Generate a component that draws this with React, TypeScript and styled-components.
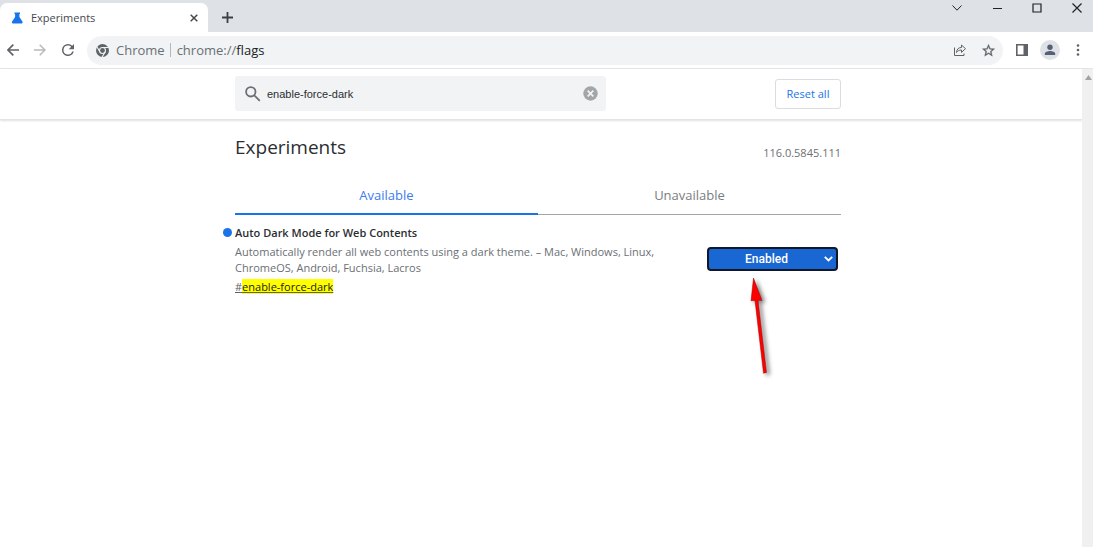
import React, { useState } from "react";
import styled, { createGlobalStyle } from "styled-components";

const GlobalStyle = createGlobalStyle`
  * { box-sizing: border-box; }
  html, body, #root { height: 100%; }
  body {
    margin: 0;
    background: #fff;
    color: #2b2e32;
    font-family: "Open Sans", "Noto Sans", sans-serif;
    font-size: 11px;
    overflow: hidden;
  }
  button, input, select { font: inherit; color: inherit; margin: 0; }
`;

const Window = styled.div`
  display: flex;
  flex-direction: column;
  min-height: 100vh;
`;

const TabStrip = styled.div`
  display: flex;
  height: 32px;
  background: #dee1e6;
`;

const BrowserTab = styled.div`
  display: flex;
  align-items: center;
  width: 208px;
  margin-top: 3px;
  padding: 0 8px 0 11px;
  border-radius: 7px 7px 0 0;
  background: #fff;
  color: #45494d;
`;

const TabTitle = styled.span`
  flex: 1;
  margin-left: 7px;
`;

const IconButton = styled.button<{ $size?: number }>`
  display: grid;
  place-items: center;
  flex: none;
  width: ${(p) => p.$size ?? 28}px;
  height: ${(p) => p.$size ?? 28}px;
  padding: 0;
  border: 0;
  background: none;
  color: #5f6368;
`;

const NewTab = styled(IconButton)`
  margin: 3px 0 0 5px;
  color: #3c4043;
`;

const WindowControls = styled.div`
  display: flex;
  gap: 12px;
  margin: -6px 2px 0 auto;
  button { color: #202124; }
`;

const Toolbar = styled.div`
  display: flex;
  align-items: center;
  height: 37px;
  padding: 0 1px 0 0;
  border-bottom: 1px solid #e4e5e7;
`;

const AddressBar = styled.div`
  display: flex;
  flex: 1;
  align-items: center;
  height: 29px;
  margin: 0 5px;
  padding: 0 1px 0 9px;
  border-radius: 15px;
  background: #f1f3f4;
  color: #6b6f74;
  font-size: 13px;
`;

const SiteChip = styled.span`
  margin-left: 7px;
  padding-right: 5px;
  border-right: 1px solid #b4b7bb;
  line-height: 14px;
`;

const Address = styled.span`
  flex: 1;
  margin-left: 6px;
  b { color: #202124; font-weight: 400; }
`;

const Viewport = styled.div`
  display: flex;
  flex: 1;
`;

const Page = styled.div`
  flex: 1;
  min-width: 0;
`;

const Scrollbar = styled.div`
  width: 11px;
  padding: 6px 0 0 3px;
  background: #f0f0f0;
  svg { display: block; }
`;

const Header = styled.header`
  padding: 7px 0 8px;
  border-bottom: 1px solid #e4e4e4;
  box-shadow: 0 1px 2px rgba(0, 0, 0, 0.12);
`;

const Container = styled.div`
  max-width: 636px;
  margin: 0 auto;
  padding: 0 18px 0 12px;
`;

const HeaderRow = styled(Container)`
  display: flex;
  align-items: center;
  justify-content: space-between;
`;

const SearchBox = styled.label`
  display: flex;
  align-items: center;
  width: 371px;
  height: 35px;
  padding: 0 4px 0 10px;
  border-radius: 3px;
  background: #f1f3f4;
`;

const SearchInput = styled.input`
  flex: 1;
  min-width: 0;
  margin-left: 6px;
  padding: 0;
  border: 0;
  outline: 0;
  background: none;
  font-family: "Liberation Sans", Arial, sans-serif;
  font-size: 11px;
`;

const ResetButton = styled.button`
  width: 66px;
  height: 30px;
  padding: 0;
  border: 1px solid #dadce0;
  border-radius: 3px;
  background: #fff;
  color: #1a73e8;
  font-weight: 500;
`;

const TitleRow = styled(Container)`
  display: flex;
  align-items: flex-end;
  justify-content: space-between;
  height: 41px;
`;

const Title = styled.h1`
  margin: 0;
  font-size: 19px;
  font-weight: 400;
  line-height: 28px;
`;

const Version = styled.span`
  color: #6b6f74;
  line-height: 16px;
`;

const Tabs = styled(Container)`
  display: flex;
  padding-top: 16px;
`;

const TabButton = styled.button<{ $active: boolean }>`
  flex: 1;
  height: 38px;
  padding: 0 0 3px;
  border: 0;
  background: none;
  box-shadow: inset 0 ${(p) => (p.$active ? "-2px #1a73e8" : "-1px #a0a4a8")};
  color: ${(p) => (p.$active ? "#3b7cec" : "#7a7d81")};
  font-size: 13px;
`;

const Experiment = styled(Container)`
  display: grid;
  grid-template-columns: 12px minmax(0, 1fr) 131px;
  padding: 9px 21px 0 0;
`;

const Dot = styled.span`
  width: 9px;
  height: 9px;
  margin-top: 4px;
  border-radius: 50%;
  background: #1a73e8;
`;

const Details = styled.div`
  max-width: 420px;
`;

const Name = styled.h2`
  margin: 0;
  font-size: 11px;
  font-weight: 600;
  line-height: 17px;
`;

const Description = styled.p`
  margin: 3px 0;
  color: #6b6f74;
  line-height: 16px;
`;

const Permalink = styled.a`
  display: block;
  color: #5f6368;
  line-height: 16px;
  mark { background: #ff0; color: #202124; }
`;

const SelectWrap = styled.div`
  display: grid;
  align-items: center;
  margin-top: 23px;
  height: 24px;
  border: 2px solid #101828;
  border-radius: 4px;
  background: #1967d2;
  color: #fff;
  svg { grid-area: 1 / 1; justify-self: end; margin-right: 3px; pointer-events: none; }
`;

const Select = styled.select`
  grid-area: 1 / 1;
  width: 100%;
  height: 20px;
  padding: 0 12px 0 0;
  border: 0;
  outline: 0;
  appearance: none;
  background: none;
  color: #fff;
  font-family: Roboto, Arial, sans-serif;
  font-size: 12px;
  font-weight: 500;
  text-align: center;
  text-align-last: center;
  option { color: #202124; }
`;

const Pointer = styled.svg`
  position: absolute;
  left: 745px;
  top: 274px;
  pointer-events: none;
  filter: drop-shadow(3px 2px 2px rgba(0, 0, 0, 0.5));
`;

type StrokeProps = { w: number; h?: number; d: string; sw?: number; color?: string };
const Stroke = ({ w, h = w, d, sw = 1, color = "currentColor" }: StrokeProps) => (
  <svg width={w} height={h} viewBox={`0 0 ${w} ${h}`} fill="none" stroke={color} strokeWidth={sw} aria-hidden="true">
    <path d={d} />
  </svg>
);

const FlaskIcon = () => (
  <svg width="13" height="12" viewBox="0 0 13 12" fill="#1a73e8" aria-hidden="true">
    <path d="M3.500.500h5.500V2h-.6v3l3 4.600c.6 1 .1 1.900-.9 1.900H2c-1 0-1.500-.9-.9-1.900L4.100 5V2h-.6z" />
  </svg>
);

const ReloadIcon = () => (
  <svg width="18" height="18" viewBox="0 0 24 24" fill="currentColor" aria-hidden="true">
    <path d="M17.650 6.350A7.960 7.960 0 0 0 12 4a8 8 0 1 0 7.730 10h-2.080A6 6 0 1 1 12 6c1.660 0 3.140.690 4.220 1.780L13 11h7V4z" />
  </svg>
);

const ChromeIcon = () => (
  <svg width="13" height="13" viewBox="0 0 24 24" aria-hidden="true">
    <circle cx="12" cy="12" r="12" fill="#5f6368" />
    <g stroke="#f1f3f4" strokeWidth="2" fill="none">
      <circle cx="12" cy="12" r="5.500" />
      <path d="M12 6.500h11M7.200 14.700 1.700 5.200M16.800 14.700 11.300 24" />
    </g>
  </svg>
);

const ShareIcon = () => (
  <svg width="14" height="14" viewBox="0 0 14 14" fill="none" stroke="currentColor" aria-hidden="true">
    <path d="M1.500 4.500v8h9.500v-2M3.500 9.500c.3-3.500 2-5 5-5V2l4 3.700-4 3.700V7c-2.300 0-3.800.8-5 2.500z" strokeLinejoin="round" />
  </svg>
);

const StarIcon = () => (
  <svg width="15" height="15" viewBox="0 0 24 24" fill="currentColor" stroke="currentColor" strokeWidth=".5" aria-hidden="true">
    <path d="m22 9.240-7.190-.620L12 2 9.190 8.630 2 9.240l5.460 4.730L5.820 21 12 17.270 18.180 21l-1.630-7.030zM12 15.400l-3.760 2.270 1-4.280-3.320-2.880 4.380-.380L12 6.100l1.710 4.040 4.380.380-3.320 2.880 1 4.280z" />
  </svg>
);

const SidePanelIcon = () => (
  <svg width="12" height="12" viewBox="0 0 12 12" aria-hidden="true">
    <path d="M.8.8h10.400v10.400H.8z" fill="none" stroke="currentColor" strokeWidth="1.600" />
    <path d="M7.500 0H12v12H7.500z" fill="currentColor" />
  </svg>
);

const ProfileIcon = () => (
  <svg width="20" height="20" viewBox="0 0 20 20" aria-hidden="true">
    <circle cx="10" cy="10" r="10" fill="#dee1e6" />
    <g fill="#565f73">
      <circle cx="10" cy="7.300" r="2.700" />
      <path d="M4.800 15v-1.200c0-1.900 3-2.800 5.200-2.800s5.200.9 5.200 2.800V15z" />
    </g>
  </svg>
);

const MenuIcon = () => (
  <svg width="4" height="12" viewBox="0 0 4 12" fill="currentColor" aria-hidden="true">
    <circle cx="2" cy="1.500" r="1.300" />
    <circle cx="2" cy="6" r="1.300" />
    <circle cx="2" cy="10.500" r="1.300" />
  </svg>
);

const ClearIcon = () => (
  <svg width="15" height="15" viewBox="0 0 15 15" aria-hidden="true">
    <circle cx="7.500" cy="7.500" r="7.200" fill="#a3a6a9" />
    <path d="m4.700 4.700 5.600 5.600m0-5.600-5.600 5.600" stroke="#f1f3f4" strokeWidth="1.700" />
  </svg>
);

export default function App() {
  const [query, setQuery] = useState("enable-force-dark");
  const [tab, setTab] = useState("Available");

  return (
    <Window>
      <GlobalStyle />
      <TabStrip>
        <BrowserTab>
          <FlaskIcon />
          <TabTitle>Experiments</TabTitle>
          <IconButton $size={12} aria-label="Close tab">
            <Stroke w={8} d="m.7.7 6.600 6.600m0-6.600L.7 7.300" sw={1.5} color="#45494d" />
          </IconButton>
        </BrowserTab>
        <NewTab aria-label="New tab">
          <Stroke w={11} d="M5.500 0v11M0 5.500h11" sw={1.8} />
        </NewTab>
        <WindowControls>
          <IconButton aria-label="Search tabs"><Stroke w={10} h={6} d="m.5.500 4.500 4.700L9.500.5" /></IconButton>
          <IconButton aria-label="Minimize"><Stroke w={9} h={1} d="M0 .5h9" sw={1.4} /></IconButton>
          <IconButton aria-label="Maximize"><Stroke w={10} d="M1 1h8v8H1z" sw={1.2} /></IconButton>
          <IconButton aria-label="Close"><Stroke w={10} d="m.5.5 9 9m0-9-9 9" sw={1.2} /></IconButton>
        </WindowControls>
      </TabStrip>

      <Toolbar>
        <IconButton aria-label="Back" $size={25}><Stroke w={12} d="M12 6H1M6.300.7 1 6l5.300 5.300" sw={1.7} /></IconButton>
        <IconButton aria-label="Forward" $size={29}><Stroke w={12} d="M0 6h11M5.700.7 11 6l-5.300 5.300" sw={1.5} color="#b6b9bc" /></IconButton>
        <IconButton aria-label="Reload" $size={28}><ReloadIcon /></IconButton>
        <AddressBar>
          <ChromeIcon />
          <SiteChip>Chrome</SiteChip>
          <Address>chrome://<b>flags</b></Address>
          <IconButton aria-label="Share"><ShareIcon /></IconButton>
          <IconButton aria-label="Bookmark"><StarIcon /></IconButton>
        </AddressBar>
        <IconButton aria-label="Side panel"><SidePanelIcon /></IconButton>
        <IconButton aria-label="Profile"><ProfileIcon /></IconButton>
        <IconButton aria-label="Menu"><MenuIcon /></IconButton>
      </Toolbar>

      <Viewport>
        <Page>
          <Header>
            <HeaderRow>
              <SearchBox>
                <Stroke w={16} d="M10.500 5.800a4.700 4.700 0 1 1-9.400 0 4.700 4.700 0 0 1 9.400 0zM9.300 9.300l5.500 5.500" sw={1.8} color="#6b6f74" />
                <SearchInput aria-label="Search flags" value={query} onChange={(e) => setQuery(e.target.value)} />
                <IconButton aria-label="Clear search" $size={23} onClick={() => setQuery("")}><ClearIcon /></IconButton>
              </SearchBox>
              <ResetButton>Reset all</ResetButton>
            </HeaderRow>
          </Header>
          <main>
            <TitleRow>
              <Title>Experiments</Title>
              <Version>116.0.5845.111</Version>
            </TitleRow>
            <Tabs role="tablist">
              {["Available", "Unavailable"].map((name) => (
                <TabButton key={name} role="tab" aria-selected={tab === name} $active={tab === name} onClick={() => setTab(name)}>
                  {name}
                </TabButton>
              ))}
            </Tabs>
            <Experiment>
              <Dot />
              <Details>
                <Name id="flag-name">Auto Dark Mode for Web Contents</Name>
                <Description>
                  Automatically render all web contents using a dark theme. – Mac, Windows, Linux, ChromeOS, Android, Fuchsia, Lacros
                </Description>
                <Permalink href="#enable-force-dark">#<mark>enable-force-dark</mark></Permalink>
              </Details>
              <SelectWrap>
                <Select aria-labelledby="flag-name" defaultValue="Enabled">
                  <option>Default</option>
                  <option>Enabled</option>
                  <option>Disabled</option>
                </Select>
                <Stroke w={9} h={6} d="m.8.800 3.700 3.700L8.200.8" sw={1.8} />
              </SelectWrap>
            </Experiment>
          </main>
        </Page>
        <Scrollbar>
          <svg width="7" height="5" viewBox="0 0 7 5" fill="#a3a3a3" aria-hidden="true"><path d="M0 5h7L3.500 0z" /></svg>
        </Scrollbar>
      </Viewport>

      <Pointer width="30" height="106" viewBox="745 274 30 106" fill="#f00" stroke="#900" strokeWidth=".5" aria-hidden="true">
        <path d="M753.500 278 762 300.500l-4-.3L766.500 372.500l-3 .7L755 300.500l-4 .3z" />
      </Pointer>
    </Window>
  );
}
